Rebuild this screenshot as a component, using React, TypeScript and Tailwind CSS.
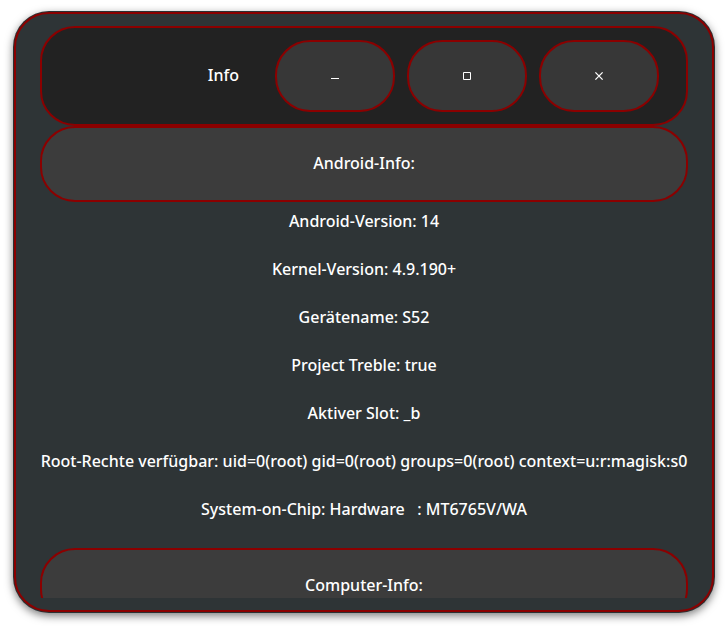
const androidInfo = [
  'Android-Version: 14',
  'Kernel-Version: 4.9.190+',
  'Gerätename: S52',
  'Project Treble: true',
  'Aktiver Slot: _b',
  'Root-Rechte verfügbar: uid=0(root) gid=0(root) groups=0(root) context=u:r:magisk:s0',
  'System-on-Chip: Hardware   : MT6765V/WA',
];

const windowActions = [
  { label: 'Minimieren', path: 'M4 10.5h8', strokeWidth: 1 },
  { label: 'Maximieren', path: 'M4.5 4.5h7v7h-7z', strokeWidth: 1 },
  { label: 'Schließen', path: 'M4.4 4.4l7.2 7.2M11.6 4.4l-7.2 7.2', strokeWidth: 1.3 },
];

function SectionHeading({ title }: { title: string }) {
  return (
    <h2 className="flex h-[76px] shrink-0 items-center justify-center rounded-[35px] border-2 border-[#8b0000] bg-[#3c3c3c] pb-0.5">
      {title}
    </h2>
  );
}

export default function App() {
  return (
    <div className="h-screen bg-white px-[14px] pt-3 pb-[17px] font-['Noto_Sans',sans-serif] text-base leading-6 font-medium text-white">
      <main className="flex h-full flex-col rounded-[35px] border-2 border-[#8b0000] bg-[#2e3436] px-6 py-3 shadow-[0_0_0_1px_#2b3032,0_3px_9px_1px_rgba(0,0,0,0.5)]">
        <header className="flex h-[100px] shrink-0 items-center rounded-[35px] border-2 border-[#8b0000] bg-[#222222] pr-[27px]">
          <h1 className="flex-1 pr-9 pb-0.5 text-right">Info</h1>
          <div className="flex gap-3">
            {windowActions.map((action) => (
              <button
                key={action.label}
                type="button"
                aria-label={action.label}
                className="flex h-[72px] w-[120px] items-center justify-center rounded-[35px] border-2 border-[#8b0000] bg-[#373737]"
              >
                <svg
                  viewBox="0 0 16 16"
                  className="size-4 fill-none stroke-white"
                  strokeWidth={action.strokeWidth}
                  aria-hidden="true"
                >
                  <path d={action.path} />
                </svg>
              </button>
            ))}
          </div>
        </header>
        <div className="flex min-h-0 flex-1 flex-col overflow-y-auto [scrollbar-width:none]">
          <SectionHeading title="Android-Info:" />
          <ul className="flex shrink-0 flex-col gap-6 pt-[7px] pb-[27px] text-center whitespace-pre">
            {androidInfo.map((line) => (
              <li key={line}>{line}</li>
            ))}
          </ul>
          <SectionHeading title="Computer-Info:" />
        </div>
      </main>
    </div>
  );
}
